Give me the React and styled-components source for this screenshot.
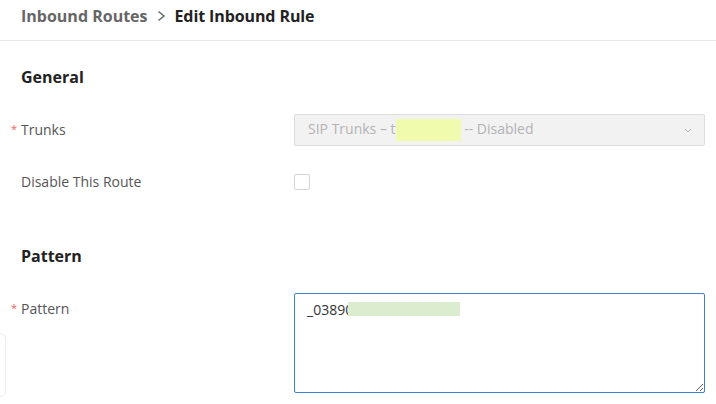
import React from 'react';
import styled, { createGlobalStyle } from 'styled-components';

const GlobalStyle = createGlobalStyle`
  html, body {
    margin: 0;
    padding: 0;
    background: #fff;
    font-family: "Open Sans", "Noto Sans", sans-serif;
    overflow: hidden;
  }
`

const Page = styled.div`
  position: relative;
  width: 716px;
  height: 404px;
  overflow: hidden;
  background: #fff;
`

const Header = styled.div`
  box-sizing: border-box;
  height: 41px;
  padding: 5px 21px 0;
  border-bottom: 1px solid #e8e8e8;
  display: flex;
  align-items: flex-start;
  gap: 9px;
  font-size: 16px;
  line-height: 22px;
  font-weight: 700;
`

const Crumb = styled.span`
  color: ${p => (p.$current ? '#222' : '#666')};
  letter-spacing: ${p => (p.$current ? '-0.1px' : '0')};
`

const Separator = styled.span`
  display: flex;
  align-items: center;
  height: 22px;
  color: #666;
`

const Body = styled.div`
  padding: 0 11px 0 21px;
`

const SectionTitle = styled.h3`
  margin: ${p => p.$top}px 0 26px;
  font-size: 16px;
  line-height: 22px;
  font-weight: 700;
  color: #222;
`

const Row = styled.div`
  display: grid;
  grid-template-columns: 273px 1fr;
  align-items: ${p => (p.$top ? 'start' : 'center')};
  min-height: 32px;
  margin-bottom: ${p => p.$gap || 0}px;
`

const Label = styled.label`
  position: relative;
  font-size: 14px;
  line-height: 22px;
  color: #555;
  padding-top: ${p => p.$pad || 0}px;
  ${p => p.$required && `
    &::before {
      content: '*';
      position: absolute;
      left: -10px;
      top: ${(p.$pad || 0) - 1}px;
      color: #e8625b;
      font-size: 11px;
    }
  `}
`

const SelectBox = styled.div`
  box-sizing: border-box;
  height: 32px;
  display: flex;
  align-items: center;
  justify-content: space-between;
  padding: 0 12px 0 13px;
  background: #f2f2f3;
  border: 1px solid #dcdcdc;
  border-radius: 2px;
  font-size: 14px;
  color: #b3b3b3;
  white-space: pre;
`

const Masked = styled.span`
  display: inline-block;
  vertical-align: middle;
  width: ${p => p.$w}px;
  height: ${p => p.$h}px;
  background: ${p => p.$color};
`

const CheckBox = styled.span`
  display: block;
  box-sizing: border-box;
  width: 16px;
  height: 16px;
  border: 1px solid #d4d4d4;
  border-radius: 2px;
  background: #fff;
`

const AreaWrap = styled.div`
  position: relative;
  height: 100px;
`

const TextArea = styled.textarea`
  box-sizing: border-box;
  display: block;
  width: 100%;
  height: 100px;
  margin: 0;
  padding: 5px 12px;
  border: 1px solid #3d7fd0;
  border-radius: 2px;
  outline: none;
  resize: vertical;
  font-family: "Open Sans", "Noto Sans", sans-serif;
  font-size: 14px;
  line-height: 22px;
  color: #333;
`

const AreaMask = styled(Masked)`
  position: absolute;
  left: 54px;
  top: 9px;
`

const SidePanel = styled.div`
  position: absolute;
  left: -20px;
  top: 333px;
  width: 24px;
  height: 62px;
  border: 1px solid #ececec;
  border-radius: 6px;
  background: #fff;
`

const Chevron = () => (
  <svg width="8" height="5" viewBox="0 0 8 5" fill="none">
    <path d="M1 1l3 3 3-3" stroke="#b8b8b8" strokeWidth="1" />
  </svg>
)

const App = () => {
  return (
    <Page>
      <GlobalStyle />
      <Header>
        <Crumb>Inbound Routes</Crumb>
        <Separator>
          <svg width="9" height="12" viewBox="0 0 9 12" fill="none">
            <path d="M1.5 1.5L7 6l-5.5 4.5" stroke="#666" strokeWidth="1.5" />
          </svg>
        </Separator>
        <Crumb $current>Edit Inbound Rule</Crumb>
      </Header>
      <Body>
        <SectionTitle $top={25}>General</SectionTitle>
        <Row $gap={20}>
          <Label $required>Trunks</Label>
          <SelectBox>
            <span>
              SIP Trunks – t<Masked $w={65} $h={22} $color="#f1fbad" /> -- Disabled
            </span>
            <Chevron />
          </SelectBox>
        </Row>
        <Row>
          <Label>Disable This Route</Label>
          <CheckBox />
        </Row>
        <SectionTitle $top={47}>Pattern</SectionTitle>
        <Row $top>
          <Label $required $pad={5}>Pattern</Label>
          <AreaWrap>
            <TextArea defaultValue="_03890" spellCheck={false} />
            <AreaMask $w={112} $h={14} $color="#dcedcf" />
          </AreaWrap>
        </Row>
      </Body>
      <SidePanel />
    </Page>
  )
}

export default App;
